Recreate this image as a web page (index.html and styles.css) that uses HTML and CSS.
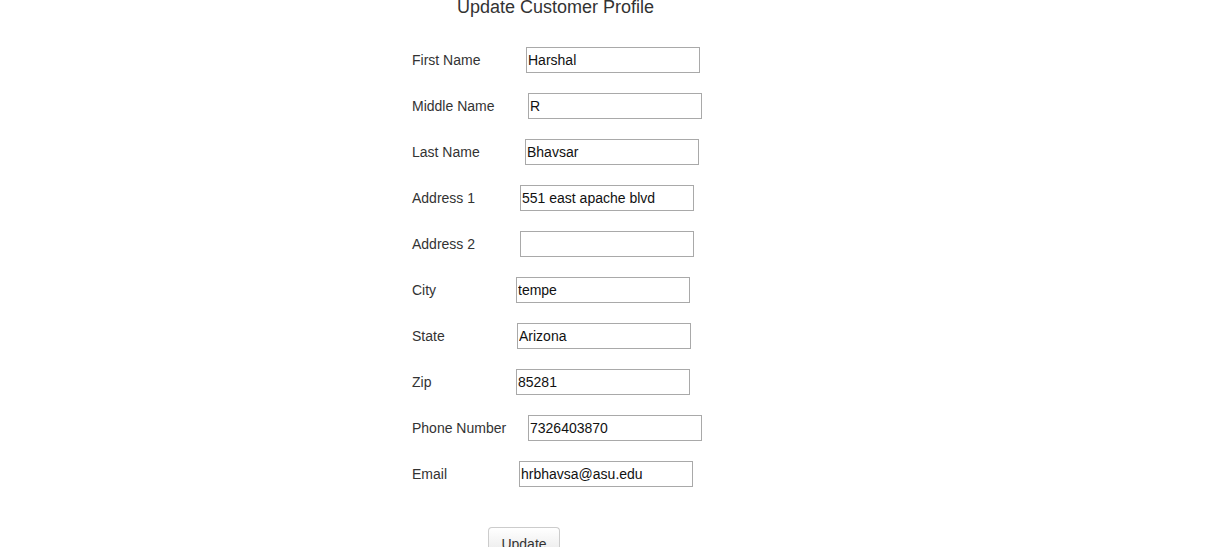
FILE: index.html
```html
<!DOCTYPE html>
<html>
<head>
<meta charset="utf-8">
<title>Update Customer Profile</title>
<link rel="stylesheet" href="styles.css">
</head>
<body>
<div class="page">
  <h2 class="title">Update Customer Profile</h2>
  <form class="form">
    <div class="row"><label class="lbl w114">First Name</label><input class="field" type="text" value="Harshal"></div>
    <div class="row"><label class="lbl w116">Middle Name</label><input class="field" type="text" value="R"></div>
    <div class="row"><label class="lbl w113">Last Name</label><input class="field" type="text" value="Bhavsar"></div>
    <div class="row"><label class="lbl w108">Address 1</label><input class="field" type="text" value="551 east apache blvd"></div>
    <div class="row"><label class="lbl w108">Address 2</label><input class="field" type="text" value=""></div>
    <div class="row"><label class="lbl w104">City</label><input class="field" type="text" value="tempe"></div>
    <div class="row"><label class="lbl w105">State</label><input class="field" type="text" value="Arizona"></div>
    <div class="row"><label class="lbl w104">Zip</label><input class="field" type="text" value="85281"></div>
    <div class="row"><label class="lbl w116">Phone Number</label><input class="field" type="text" value="7326403870"></div>
    <div class="row"><label class="lbl w107">Email</label><input class="field" type="text" value="hrbhavsa@asu.edu"></div>
    <div class="actions"><button class="btn" type="button">Update</button></div>
  </form>
</div>
</body>
</html>
```
FILE: styles.css
```css
html, body {
  margin: 0;
  padding: 0;
  background: #ffffff;
}
body {
  font-family: "Liberation Sans", Arial, sans-serif;
  font-size: 14px;
  color: #333333;
  overflow: hidden;
}
.page {
  width: 1229px;
  height: 547px;
  overflow: hidden;
}
.title {
  margin: -3px 0 0 457px;
  font-size: 18px;
  font-weight: normal;
  line-height: 20px;
  color: #333333;
}
.form {
  margin: 30px 0 0 412px;
  display: flex;
  flex-direction: column;
  gap: 20px;
}
.row {
  display: flex;
  align-items: center;
  height: 26px;
}
.lbl {
  line-height: 20px;
  flex: none;
  color: #333333;
}
.w104 { width: 104px; }
.w105 { width: 105px; }
.w107 { width: 107px; }
.w108 { width: 108px; }
.w113 { width: 113px; }
.w114 { width: 114px; }
.w116 { width: 116px; }
.field {
  box-sizing: border-box;
  width: 174px;
  height: 26px;
  margin: 0;
  padding: 1px 1px;
  border: 1px solid #a9a9a9;
  border-radius: 0;
  font-family: "Liberation Sans", Arial, sans-serif;
  font-size: 14px;
  color: #111111;
  background: #ffffff;
  outline: none;
}
.actions {
  margin-top: 20px;
  padding-left: 76px;
}
.btn {
  box-sizing: border-box;
  width: 72px;
  height: 32px;
  padding: 6px 12px;
  border: 1px solid #cccccc;
  border-bottom-color: #b3b3b3;
  border-radius: 4px;
  background: linear-gradient(to bottom, #ffffff, #e6e6e6);
  font-family: "Liberation Sans", Arial, sans-serif;
  font-size: 14px;
  line-height: 20px;
  color: #333333;
}
```
